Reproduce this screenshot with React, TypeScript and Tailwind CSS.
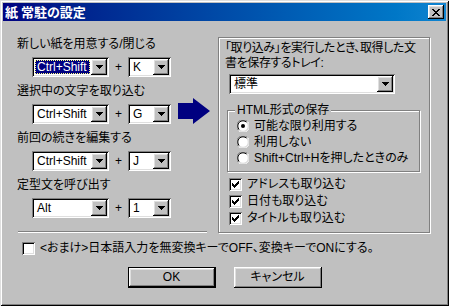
import React from 'react';

const raised =
  'shadow-[inset_-1px_-1px_#000000,inset_1px_1px_#ffffff,inset_-2px_-2px_#808080,inset_2px_2px_#dfdfdf]';
const sunken =
  'shadow-[inset_1px_1px_#808080,inset_-1px_-1px_#ffffff,inset_2px_2px_#000000,inset_-2px_-2px_#dfdfdf]';

function DropButton() {
  return (
    <div className={`w-[16px] h-full bg-[#c0c0c0] flex items-center justify-center ${raised}`}>
      <svg width="7" height="4" viewBox="0 0 7 4">
        <path d="M0 0h7v1H0zM1 1h5v1H1zM2 2h3v1H2zM3 3h1v1H3z" fill="#000" />
      </svg>
    </div>
  );
}

function Combo({ value, className, focused }: { value: string; className: string; focused?: boolean }) {
  return (
    <div className={`h-[20px] bg-white flex p-[2px] ${sunken} ${className}`}>
      <div className="flex-1 flex items-stretch p-[1px] min-w-0">
        {focused ? (
          <div className="flex-1 flex items-center pl-[1px] bg-[#000080] text-white border border-dotted border-[#ffff80] whitespace-nowrap">
            {value}
          </div>
        ) : (
          <div className="flex-1 flex items-center pl-[2px] whitespace-nowrap">{value}</div>
        )}
      </div>
      <DropButton />
    </div>
  );
}

function KeyRow({ mod, key1, focused }: { mod: string; key1: string; focused?: boolean }) {
  return (
    <div className="flex items-center ml-[15px] mt-[5px]">
      <Combo value={mod} className="w-[77px]" focused={focused} />
      <span className="w-[19px] text-center">+</span>
      <Combo value={key1} className="w-[43px]" />
    </div>
  );
}

function Check({ checked }: { checked?: boolean }) {
  return (
    <div className={`w-[13px] h-[13px] bg-white shrink-0 flex items-center justify-center ${sunken}`}>
      {checked && (
        <svg width="7" height="7" viewBox="0 0 7 7">
          <path d="M6 0h1v3H6zM5 1h1v3H5zM4 2h1v3H4zM3 3h1v3H3zM2 4h1v3H2zM1 3h1v3H1zM0 2h1v3H0z" fill="#000" />
        </svg>
      )}
    </div>
  );
}

function Radio({ checked }: { checked?: boolean }) {
  return (
    <svg width="12" height="12" viewBox="0 0 12 12" className="shrink-0">
      <circle cx="6" cy="6" r="5.5" fill="#ffffff" />
      <path d="M1.5 10.5A6 6 0 0 1 10.5 1.5" stroke="#808080" strokeWidth="1" fill="none" />
      <path d="M2.3 9.7A5 5 0 0 1 9.7 2.3" stroke="#000000" strokeWidth="1" fill="none" />
      <path d="M10.5 1.5A6 6 0 0 1 1.5 10.5" stroke="#ffffff" strokeWidth="1" fill="none" />
      <path d="M9.7 2.3A5 5 0 0 1 2.3 9.7" stroke="#dfdfdf" strokeWidth="1" fill="none" />
      {checked && <circle cx="6" cy="6" r="2" fill="#000" />}
    </svg>
  );
}

export default function App() {
  return (
    <div className="w-[449px] h-[306px] bg-[#c0c0c0] text-black text-[12px] leading-[15px] font-['Liberation_Sans','Noto_Sans_CJK_JP',sans-serif] [font-feature-settings:'palt'] p-[3px] flex flex-col shadow-[inset_1px_1px_#dfdfdf,inset_-1px_-1px_#000000,inset_2px_2px_#ffffff,inset_-2px_-2px_#808080]">
      {/* Title bar */}
      <div className="h-[18px] shrink-0 flex items-center bg-gradient-to-r from-[#000080] to-[#1084d0] pl-[2px] pr-[2px]">
        <span className="flex-1 text-white font-bold text-[13px] leading-[18px] font-['Noto_Sans_CJK_JP',sans-serif]">紙 常駐の設定</span>
        <div className={`w-[16px] h-[14px] bg-[#c0c0c0] flex items-center justify-center ${raised}`}>
          <svg width="8" height="7" viewBox="0 0 8 7">
            <path d="M0 0h2v1H0zM6 0h2v1H6zM1 1h2v1H1zM5 1h2v1H5zM2 2h4v1H2zM3 3h2v1H3zM2 4h4v1H2zM1 5h2v1H1zM5 5h2v1H5zM0 6h2v1H0zM6 6h2v1H6z" fill="#000" />
          </svg>
        </div>
      </div>

      {/* Body */}
      <div className="flex flex-col">
        <div className="flex mt-[16px] pl-[14px]">
          {/* Left section */}
          <div className="w-[193px] flex flex-col">
            <div className="flex">
              <div className="w-[161px] flex flex-col">
                <div className="whitespace-nowrap">新しい紙を用意する/閉じる</div>
                <KeyRow mod="Ctrl+Shift" key1="K" focused />
                <div className="mt-[7px] whitespace-nowrap">選択中の文字を取り込む</div>
                <KeyRow mod="Ctrl+Shift" key1="G" />
                <div className="mt-[7px] whitespace-nowrap">前回の続きを編集する</div>
                <KeyRow mod="Ctrl+Shift" key1="J" />
                <div className="mt-[7px] whitespace-nowrap">定型文を呼び出す</div>
                <KeyRow mod="Alt" key1="1" />
              </div>
              <svg width="32" height="26" viewBox="0 0 32 26" className="mt-[61px]">
                <path d="M0 5h15V0l17 13-17 13v-5H0z" fill="#000080" />
              </svg>
            </div>
            <div className="mt-[13px] ml-[1px] w-[189px] h-[2px] border-t border-t-[#808080] border-b border-b-white" />
          </div>

          {/* Right group */}
          <div className="ml-[8px] w-[212px] h-[196px] border border-[#808080] shadow-[1px_1px_0_#ffffff,inset_1px_1px_0_#ffffff] pt-[3px] pl-[6px] flex flex-col">
            <div className="whitespace-nowrap tracking-[-0.4px]">
              「取り込み」を実行したとき、取得した文
              <br />
              書を保存するトレイ:
            </div>
            <Combo value="標準" className="w-[166px] ml-[4px] mt-[3px]" />
            <div className="relative ml-[2px] mt-[16px] w-[193px] h-[62px] border border-[#808080] shadow-[1px_1px_0_#ffffff,inset_1px_1px_0_#ffffff] pt-[7px] pl-[9px]">
              <span className="absolute left-[7px] top-[-8px] px-[2px] bg-[#c0c0c0] whitespace-nowrap">HTML形式の保存</span>
              <div className="h-[16px] flex items-center gap-[5px] whitespace-nowrap">
                <Radio checked />
                <span>可能な限り利用する</span>
              </div>
              <div className="h-[16px] flex items-center gap-[5px] whitespace-nowrap">
                <Radio />
                <span>利用しない</span>
              </div>
              <div className="h-[16px] flex items-center gap-[5px] whitespace-nowrap">
                <Radio />
                <span>Shift+Ctrl+Hを押したときのみ</span>
              </div>
            </div>
            <div className="mt-[4px] ml-[4px]">
              <div className="h-[17px] flex items-center gap-[5px] whitespace-nowrap">
                <Check checked />
                <span>アドレスも取り込む</span>
              </div>
              <div className="h-[17px] flex items-center gap-[5px] whitespace-nowrap">
                <Check checked />
                <span>日付も取り込む</span>
              </div>
              <div className="h-[17px] flex items-center gap-[5px] whitespace-nowrap">
                <Check checked />
                <span>タイトルも取り込む</span>
              </div>
            </div>
          </div>
        </div>

        {/* Extra option */}
        <div className="mt-[8px] pl-[19px] h-[15px] flex items-center gap-[5px] whitespace-nowrap">
          <Check />
          <span>&lt;おまけ&gt;日本語入力を無変換キーでOFF、変換キーでONにする。</span>
        </div>

        {/* Buttons */}
        <div className="mt-[11px] flex justify-center gap-[18px]">
          <div className="w-[88px] h-[21px] border border-black">
            <div className={`h-full bg-[#c0c0c0] flex items-center justify-center ${raised}`}>OK</div>
          </div>
          <div className={`w-[88px] h-[21px] bg-[#c0c0c0] flex items-center justify-center ${raised}`}>キャンセル</div>
        </div>
      </div>
    </div>
  );
}
